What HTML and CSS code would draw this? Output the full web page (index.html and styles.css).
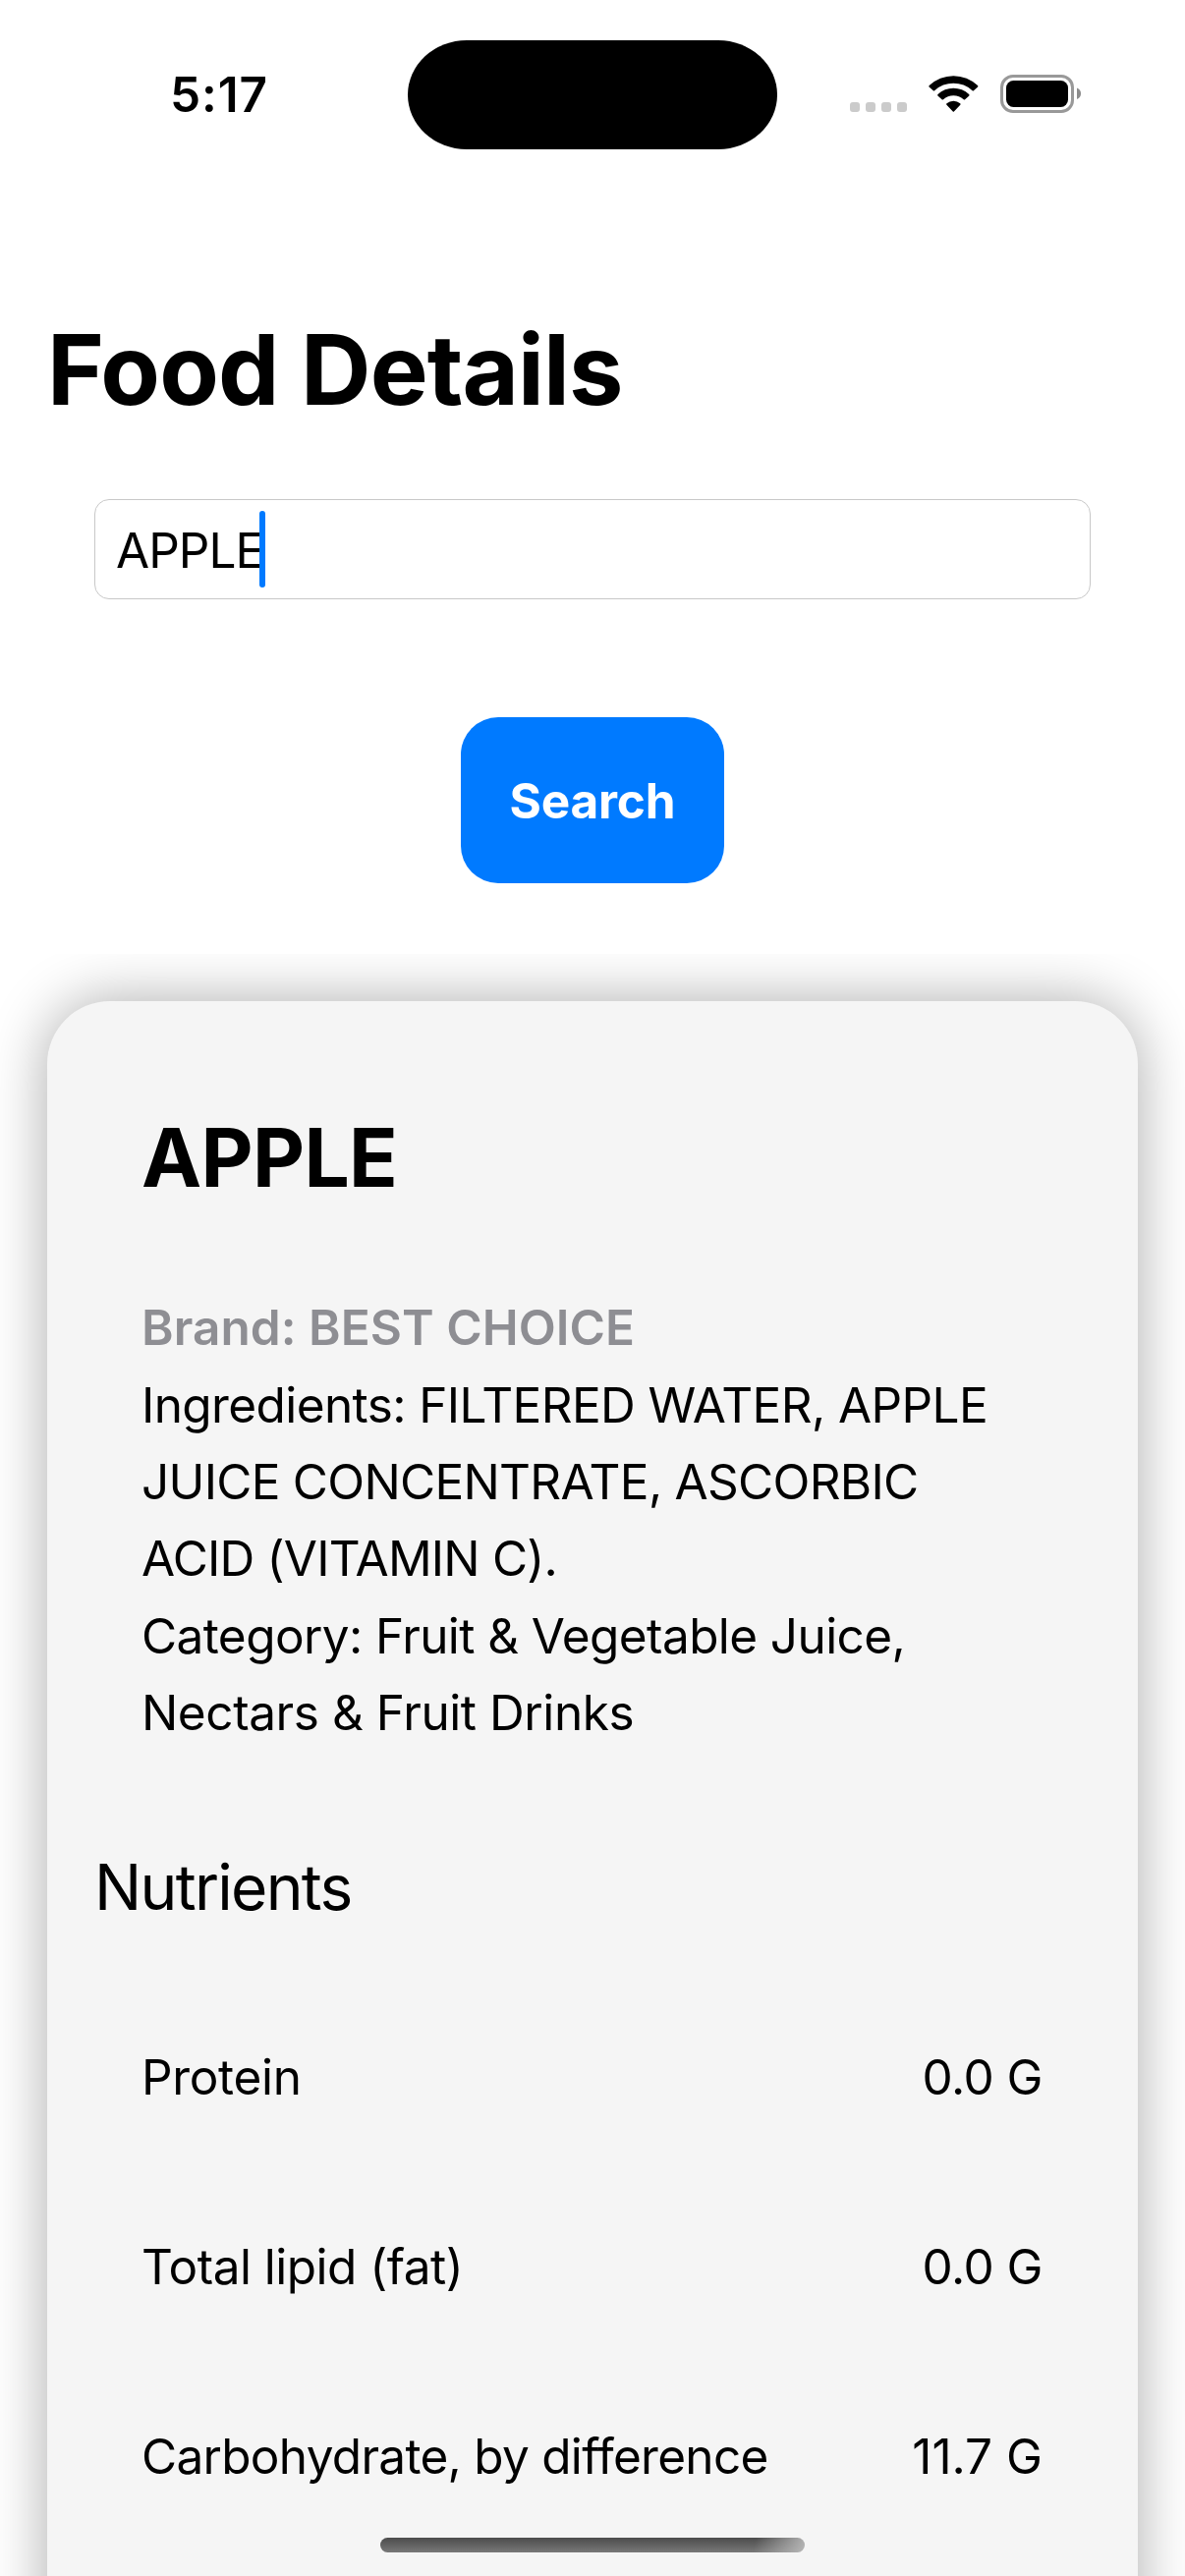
FILE: index.html
```
<!DOCTYPE html>
<html lang="en">
<head>
<meta charset="utf-8">
<title>Food Details</title>
<link rel="stylesheet" href="styles.css">
</head>
<body>
<div class="screen">
  <header class="status">
    <time class="clock">5:17</time>
    <div class="island"></div>
    <svg class="indicators" width="236" height="40" viewBox="865 76 236 40" aria-hidden="true">
      <g fill="#cbcbcb">
        <rect x="865" y="104" width="10" height="10" rx="3"/>
        <rect x="881" y="104" width="10" height="10" rx="3"/>
        <rect x="897" y="104" width="10" height="10" rx="3"/>
        <rect x="913" y="104" width="10" height="10" rx="3"/>
      </g>
      <path d="M945.6 88.6Q945 87.8 945.7 87.1A35.500 35.500 0 0 1 995 87.1Q995.700 87.800 995.100 88.600L990.900 92.300Q990.300 92.900 989.600 92.300A28 28 0 0 0 951.100 92.300Q950.400 92.900 949.800 92.300Z"/>
      <path d="M954.400 97.500Q953.800 96.700 954.500 96A23 23 0 0 1 986.200 96Q986.900 96.700 986.300 97.500L982.100 101.200Q981.400 101.800 980.700 101.200A15.500 15.500 0 0 0 960 101.200Q959.300 101.800 958.600 101.200Z"/>
      <path d="M963.400 106.700Q962.700 106 963.500 105.300A10.500 10.500 0 0 1 977.200 105.300Q978 106 977.300 106.700L970.900 113.400Q970.350 113.900 969.800 113.400Z"/>
      <rect x="1019.500" y="77.500" width="72" height="36" rx="11.500" fill="none" stroke="#999" stroke-width="3"/>
      <rect x="1024" y="82" width="63" height="27" rx="7.500"/>
      <path d="M1096 89.500Q1100 91 1100 95.300T1096 101Z" fill="#8c8c8c"/>
    </svg>
  </header>

  <h1 class="title">Food Details</h1>
  <div class="field"><span class="value">APPLE</span><span class="caret"></span></div>
  <button class="search" type="button">Search</button>

  <main class="results">
    <article class="card">
      <h2 class="name">APPLE</h2>
      <p class="brand">Brand: BEST CHOICE</p>
      <p class="text">
        <span class="line l1">Ingredients: FILTERED WATER, APPLE</span>
        <span class="line l2">JUICE CONCENTRATE, ASCORBIC</span>
        <span class="line l3">ACID (VITAMIN C).</span>
      </p>
      <p class="text">
        <span class="line l4">Category: Fruit &amp; Vegetable Juice,</span>
        <span class="line l5">Nectars &amp; Fruit Drinks</span>
      </p>
      <h3 class="section">Nutrients</h3>
      <div class="nutrients">
        <div class="row"><span class="n1">Protein</span><span class="amount">0.0 G</span></div>
        <div class="row"><span class="n2">Total lipid (fat)</span><span class="amount">0.0 G</span></div>
        <div class="row"><span class="n3">Carbohydrate, by difference</span><span class="amount wide">11.7 G</span></div>
      </div>
    </article>
  </main>
  <div class="home"></div>
</div>
</body>
</html>
```
FILE: styles.css
```
* { box-sizing: border-box; margin: 0; padding: 0; }

body {
  background: #fff;
  color: #000;
  font: 400 49.5px/78px "Inter", sans-serif;
}

.screen {
  position: relative;
  display: flex;
  flex-direction: column;
  width: 1206px;
  height: 2622px;
  overflow: hidden;
}

.status {
  display: grid;
  grid-template-columns: 415px 376px 1fr;
  flex: none;
  height: 316px;
  padding-top: 41px;
  align-items: start;
}
.clock {
  padding-left: 173px;
  font-weight: 600;
  line-height: 110px;
  letter-spacing: 0.9px;
}
.island {
  height: 111px;
  border-radius: 60px / 55.5px;
  background: #000;
}
.indicators { margin: 35px 0 0 74px; }

.title {
  flex: none;
  padding-left: 48px;
  font-size: 99px;
  font-weight: 700;
  line-height: 120px;
  letter-spacing: -0.9px;
}

.field {
  display: flex;
  flex: none;
  align-items: center;
  height: 102px;
  margin: 72px 96px 0;
  padding: 1px 0 0 21px;
  border: 1px solid #c8c8c8;
  border-radius: 15px;
}
.value { letter-spacing: -0.95px; }
.caret {
  width: 6px;
  height: 78px;
  margin: -2px 0 0 -4px;
  border-radius: 3px;
  background: #007aff;
}

.search {
  flex: none;
  align-self: center;
  width: 268px;
  height: 169px;
  margin-top: 120px;
  border: 0;
  border-radius: 38px;
  background: #007aff;
  color: #fff;
  font: 700 49.5px/78px "Inter", sans-serif;
  letter-spacing: -0.2px;
}

/* The scroll area cuts the card's shadow off at its top edge. */
.results {
  flex: none;
  height: 1651px;
  margin-top: 72px;
  padding: 48px 48px 0;
  overflow: hidden;
}
.card {
  height: 1800px;
  padding-top: 110px;
  border-radius: 64px;
  background: #f5f5f5;
  box-shadow: 0 0 60px rgba(0, 0, 0, 0.33);
}
.name {
  padding-left: 96px;
  font-size: 82px;
  font-weight: 700;
  line-height: 100px;
  letter-spacing: -0.7px;
}
.brand {
  margin-top: 83px;
  padding-left: 96px;
  color: #8e8e93;
  font-weight: 600;
  letter-spacing: 0.05px;
}
.text {
  padding: 1px 0 0 96px;
}
.line { display: block; white-space: nowrap; }
.l1 { letter-spacing: -0.6px; }
.l2 { letter-spacing: -0.724px; }
.l3 { letter-spacing: -0.8px; }
.l4 { letter-spacing: -0.598px; }
.l5 { letter-spacing: -0.43px; }

.section {
  margin-top: 100px;
  padding-left: 48px;
  font-size: 64px;
  font-weight: 400;
  letter-spacing: -1.7px;
}
.nutrients { margin-top: 57px; }
.row {
  display: flex;
  align-items: center;
  justify-content: space-between;
  height: 193px;
  padding: 0 97px 0 96px;
}
.n1 { letter-spacing: -0.33px; }
.n2 { letter-spacing: -0.52px; }
.n3 { letter-spacing: -0.71px; }
.amount { letter-spacing: -0.5px; }
.wide { letter-spacing: 0; }

.home {
  position: absolute;
  left: 387px;
  top: 2583px;
  width: 432px;
  height: 15px;
  border-radius: 7.5px;
  background:
    linear-gradient(100deg, rgba(190, 190, 190, 0) 88%, rgba(190, 190, 190, 0.9) 100%),
    linear-gradient(#4c4c4c, #787878);
}
```
